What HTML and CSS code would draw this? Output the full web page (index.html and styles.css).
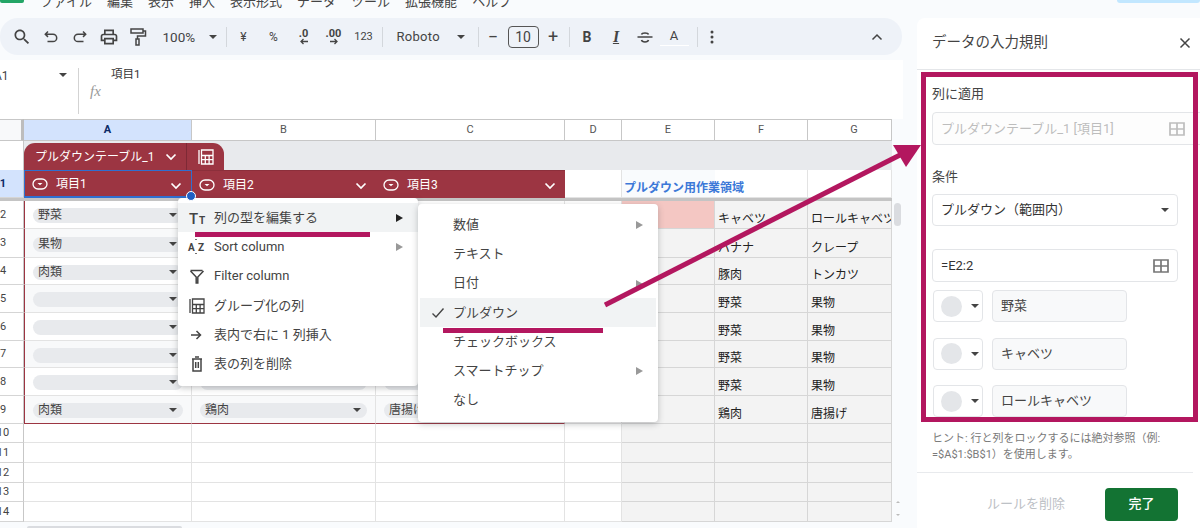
FILE: index.html
```html
<!DOCTYPE html>
<html lang="ja">
<head>
<meta charset="utf-8">
<title>データの入力規則</title>
<link rel="stylesheet" href="styles.css">
</head>
<body>
<svg class="defs" width="0" height="0">
  <symbol id="grid-ic" viewBox="0 0 16 14"><path d="M1 1h14v12H1zM8 1v12M1 7h14" fill="none" stroke="currentColor" stroke-width="1.7"/></symbol>
  <symbol id="chev" viewBox="0 0 12 8"><path d="M1.500 1.500 6 6l4.500-4.500" fill="none" stroke="currentColor" stroke-width="1.700"/></symbol>
  <symbol id="chip-ic" viewBox="0 0 16 12"><rect x="1" y="1" width="14" height="10" rx="5" fill="none" stroke="currentColor" stroke-width="1.300"/><path d="M5.500 5h5L8 7.200z" fill="currentColor"/></symbol>
  <symbol id="calc-ic" viewBox="0 0 16 16"><path d="M1 1v14M3.500 1h11.500v14H3.500z M3.500 6.500h11.500M7.300 6.500v8.500M11.100 6.500v8.500M3.500 10.700h11.500" fill="none" stroke="currentColor" stroke-width="1.300"/></symbol>
</svg>

<div class="app">
  <div class="left">
    <div class="menubar">
      <span class="logo"></span>
      <nav class="menus"><span>ファイル</span><span>編集</span><span>表示</span><span>挿入</span><span>表示形式</span><span>データ</span><span>ツール</span><span>拡張機能</span><span>ヘルプ</span></nav>
    </div>

    <div class="toolbar">
      <span class="tb"><svg width="20" height="20" viewBox="0 0 24 24"><path fill="#444" d="M15.500 14h-.79l-.28-.27C15.410 12.590 16 11.110 16 9.500 16 5.910 13.090 3 9.500 3S3 5.910 3 9.500 5.910 16 9.500 16c1.610 0 3.090-.59 4.230-1.570l.27.28v.79l5 4.990L20.490 19l-4.990-5zm-6 0C7.010 14 5 11.990 5 9.500S7.010 5 9.500 5 14 7.010 14 9.500 11.990 14 9.500 14z"/></svg></span>
      <span class="tb"><svg width="16" height="16" viewBox="0 0 16 16"><path d="M5 2.500 2.300 5.200 5 7.900M2.500 5.200H10a3.700 3.700 0 0 1 0 7.400H4.500" fill="none" stroke="#444" stroke-width="1.500"/></svg></span>
      <span class="tb"><svg width="16" height="16" viewBox="0 0 16 16"><path d="M11 2.500l2.700 2.700L11 7.900M13.500 5.200H6a3.700 3.700 0 0 0 0 7.400h5.500" fill="none" stroke="#444" stroke-width="1.500"/></svg></span>
      <span class="tb"><svg width="20" height="20" viewBox="0 0 24 24"><path fill="#444" d="M19 8h-1V3H6v5H5c-1.660 0-3 1.340-3 3v6h4v4h12v-4h4v-6c0-1.660-1.340-3-3-3zM8 5h8v3H8V5zm8 12v2H8v-4h8v2zm2-2v-2H6v2H4v-4c0-.55.45-1 1-1h14c.55 0 1 .45 1 1v4h-2z"/></svg></span>
      <span class="tb"><svg width="18" height="20" viewBox="0 0 18 20"><path d="M2 2h12v4H2zM14 4h2.500v5H8.500v3M7 12h3v6H7z" fill="none" stroke="#444" stroke-width="1.500"/></svg></span>
      <span class="tb-zoom">100%</span><span class="caret tb-caret"></span>
      <span class="sep sep-a"></span>
      <span class="tb2">¥</span><span class="tb2">%</span>
      <span class="tb2 dec"><b>.0</b><svg width="10" height="7" viewBox="0 0 10 7"><path d="M9 3.500H2M4.500 1 2 3.500 4.500 6" fill="none" stroke="#444" stroke-width="1.300"/></svg></span>
      <span class="tb2 dec"><b>.00</b><svg width="10" height="7" viewBox="0 0 10 7"><path d="M1 3.500h7M5.500 1 8 3.500 5.500 6" fill="none" stroke="#444" stroke-width="1.300"/></svg></span>
      <span class="tb2 num">123</span>
      <span class="sep sep-b"></span>
      <span class="tb-font">Roboto</span><span class="caret tb-caret2"></span>
      <span class="sep sep-c"></span>
      <span class="tb3 sz">−</span><span class="size-box">10</span><span class="tb3 sz">+</span>
      <span class="sep sep-d"></span>
      <span class="tb4 bold">B</span><span class="tb4 ital">I</span>
      <span class="tb4"><svg width="18" height="18" viewBox="0 0 18 18"><path d="M1.500 9h15M5.500 6.500C6 4.500 12 4.500 12.500 6.500M5.500 12c.5 2.500 6.500 2.500 7 0" fill="none" stroke="#444" stroke-width="1.500"/></svg></span>
      <span class="tb4 acolor">A</span>
      <span class="sep sep-e"></span>
      <span class="tb4"><svg width="4" height="14" viewBox="0 0 4 14"><circle cx="2" cy="2" r="1.500" fill="#444"/><circle cx="2" cy="7" r="1.500" fill="#444"/><circle cx="2" cy="12" r="1.500" fill="#444"/></svg></span>
      <span class="tb-end"><svg width="12" height="8" viewBox="0 0 12 8"><path d="M1.500 6.500 6 2l4.500 4.500" fill="none" stroke="#444" stroke-width="1.500"/></svg></span>
    </div>

    <div class="formula">
      <div class="namebox"><span>A1</span><span class="caret"></span></div>
      <div class="fx-wrap"><span class="fx">fx</span></div>
      <div class="fx-val">項目1</div>
    </div>

    <div class="sheet">
      <div class="corner"></div>
      <div class="ch ch-on">A</div><div class="ch">B</div><div class="ch">C</div><div class="ch">D</div><div class="ch">E</div><div class="ch">F</div><div class="ch ch-g">G</div>

      <div class="rh rh-blank"></div>
      <div class="tabrow">
        <div class="tab"><span class="tab-name">プルダウンテーブル_1</span><svg class="tab-chev" width="12" height="8"><use href="#chev"/></svg><span class="tab-calc"><svg width="16" height="16"><use href="#calc-ic"/></svg></span></div>
      </div>

      <div class="rh rh-on">1</div>
      <div class="th th-a"><svg class="th-ic" width="16" height="12"><use href="#chip-ic"/></svg><span>項目1</span><svg class="th-chev" width="12" height="8"><use href="#chev"/></svg><i class="handle"></i></div>
      <div class="th"><svg class="th-ic" width="16" height="12"><use href="#chip-ic"/></svg><span>項目2</span><svg class="th-chev" width="12" height="8"><use href="#chev"/></svg></div>
      <div class="th"><svg class="th-ic" width="16" height="12"><use href="#chip-ic"/></svg><span>項目3</span><svg class="th-chev" width="12" height="8"><use href="#chev"/></svg></div>
      <div class="c"></div>
      <div class="c c-title">プルダウン用作業領域</div><div class="c"></div><div class="c"></div>

      <div class="freeze"></div>

      <div class="rh">2</div>
      <div class="c t-a"><span class="chip">野菜<i class="caret"></i></span></div><div class="c"><span class="chip"><i class="caret"></i></span></div><div class="c"></div><div class="c"></div>
      <div class="c w c-pink"></div><div class="c w">キャベツ</div><div class="c w clip">ロールキャベツ</div>

      <div class="rh">3</div>
      <div class="c t-a alt"><span class="chip">果物<i class="caret"></i></span></div><div class="c alt"></div><div class="c alt"></div><div class="c"></div>
      <div class="c w"></div><div class="c w">バナナ</div><div class="c w">クレープ</div>

      <div class="rh">4</div>
      <div class="c t-a"><span class="chip">肉類<i class="caret"></i></span></div><div class="c"></div><div class="c"></div><div class="c"></div>
      <div class="c w"></div><div class="c w">豚肉</div><div class="c w">トンカツ</div>

      <div class="rh">5</div>
      <div class="c t-a alt"><span class="chip"><i class="caret"></i></span></div><div class="c alt"></div><div class="c alt"></div><div class="c"></div>
      <div class="c w"></div><div class="c w">野菜</div><div class="c w">果物</div>

      <div class="rh">6</div>
      <div class="c t-a"><span class="chip"><i class="caret"></i></span></div><div class="c"></div><div class="c"></div><div class="c"></div>
      <div class="c w"></div><div class="c w">野菜</div><div class="c w">果物</div>

      <div class="rh">7</div>
      <div class="c t-a alt"><span class="chip"><i class="caret"></i></span></div><div class="c alt"></div><div class="c alt"></div><div class="c"></div>
      <div class="c w"></div><div class="c w">野菜</div><div class="c w">果物</div>

      <div class="rh">8</div>
      <div class="c t-a"><span class="chip"><i class="caret"></i></span></div><div class="c"><span class="chip"><i class="caret"></i></span></div><div class="c"><span class="chip"></span></div><div class="c"></div>
      <div class="c w"></div><div class="c w">野菜</div><div class="c w">果物</div>

      <div class="rh">9</div>
      <div class="c t-a t-b alt"><span class="chip">肉類<i class="caret"></i></span></div><div class="c t-b alt"><span class="chip">鶏肉<i class="caret"></i></span></div><div class="c t-b alt"><span class="chip">唐揚げ<i class="caret"></i></span></div><div class="c"></div>
      <div class="c w"></div><div class="c w">鶏肉</div><div class="c w">唐揚げ</div>

      <div class="rh">10</div><div class="c"></div><div class="c"></div><div class="c"></div><div class="c"></div><div class="c w"></div><div class="c w"></div><div class="c w"></div>
      <div class="rh">11</div><div class="c"></div><div class="c"></div><div class="c"></div><div class="c"></div><div class="c w"></div><div class="c w"></div><div class="c w"></div>
      <div class="rh">12</div><div class="c"></div><div class="c"></div><div class="c"></div><div class="c"></div><div class="c w"></div><div class="c w"></div><div class="c w"></div>
      <div class="rh">13</div><div class="c"></div><div class="c"></div><div class="c"></div><div class="c"></div><div class="c w"></div><div class="c w"></div><div class="c w"></div>
      <div class="rh">14</div><div class="c"></div><div class="c"></div><div class="c"></div><div class="c"></div><div class="c w"></div><div class="c w"></div><div class="c w"></div>
    </div>
  </div>

  <aside class="panel">
    <header class="panel-head"><h1>データの入力規則</h1><svg width="12" height="12" viewBox="0 0 12 12"><path d="M1.500 1.500l9 9M10.500 1.500l-9 9" stroke="#444" stroke-width="1.500"/></svg></header>
    <div class="panel-scroll">
      <div class="lbl lbl-1">列に適用</div>
      <div class="field field-wide"><span class="ph">プルダウンテーブル_1 [項目1]</span><svg class="gi-light" width="16" height="14"><use href="#grid-ic"/></svg></div>
      <div class="lbl lbl-2">条件</div>
      <div class="field field-sel"><span>プルダウン（範囲内）</span><span class="caret"></span></div>
      <div class="field field-range"><span>=E2:2</span><svg class="gi" width="16" height="14"><use href="#grid-ic"/></svg></div>
      <div class="opt"><span class="swatch"><i></i><span class="caret"></span></span><span class="opt-text">野菜</span></div>
      <div class="opt"><span class="swatch"><i></i><span class="caret"></span></span><span class="opt-text">キャベツ</span></div>
      <div class="opt"><span class="swatch"><i></i><span class="caret"></span></span><span class="opt-text">ロールキャベツ</span></div>
    </div>
    <p class="hint">ヒント: 行と列をロックするには絶対参照（例: =$A$1:$B$1）を使用します。</p>
    <footer class="panel-foot"><span class="del">ルールを削除</span><span class="done">完了</span></footer>
  </aside>
</div>

<span class="share"></span>

<div class="sb-thumb"></div>
<div class="sb-btns"><i class="up"></i><i class="down"></i></div>
<div class="hs-thumb"></div>

<div class="ctx ctx-1">
  <div class="mi on"><svg class="mi-ic" width="20" height="16" viewBox="0 0 20 16"><text x="2" y="14" class="ict">T</text><text x="12" y="14" class="ics">T</text></svg><span>列の型を編集する</span><i class="arr dark"></i></div>
  <div class="mi"><svg class="mi-ic" width="20" height="18" viewBox="0 0 20 18"><text x="1" y="13" class="ics">A</text><text x="11" y="13" class="ics">Z</text><path d="M9 1v1M9 15v1" stroke="#444" stroke-width="1.500"/></svg><span>Sort column</span><i class="arr"></i></div>
  <div class="mi"><svg class="mi-ic" width="20" height="16" viewBox="0 0 20 16"><path d="M3.500 2.500h12M3.500 3l5.700 6v6h1.600V9l5.700-6" fill="none" stroke="#444" stroke-width="1.500"/></svg><span>Filter column</span></div>
  <div class="mi"><svg class="mi-ic" width="20" height="16"><use href="#calc-ic"/></svg><span>グループ化の列</span></div>
  <div class="mi"><svg class="mi-ic" width="20" height="14" viewBox="0 0 20 14"><path d="M4 7h10M9.500 3l4 4-4 4" fill="none" stroke="#444" stroke-width="1.500"/></svg><span>表内で右に 1 列挿入</span></div>
  <div class="mi"><svg class="mi-ic" width="20" height="16" viewBox="0 0 20 16"><path d="M5 3h10M8 1h4M6 3v12h8V3M8.700 6v6M11.300 6v6" fill="none" stroke="#444" stroke-width="1.500"/></svg><span>表の列を削除</span></div>
</div>

<div class="ctx ctx-2">
  <div class="mi"><span class="sub">数値</span><i class="arr"></i></div>
  <div class="mi"><span class="sub">テキスト</span></div>
  <div class="mi"><span class="sub">日付</span><i class="arr"></i></div>
  <div class="mi on"><svg class="chk" width="14" height="12" viewBox="0 0 14 12"><path d="M1.500 6.500 5 10l7.500-8.500" fill="none" stroke="#444" stroke-width="1.400"/></svg><span class="sub">プルダウン</span></div>
  <div class="mi"><span class="sub">チェックボックス</span></div>
  <div class="mi"><span class="sub">スマートチップ</span><i class="arr"></i></div>
  <div class="mi"><span class="sub">なし</span></div>
</div>

<svg class="annot" width="1200" height="528" viewBox="0 0 1200 528">
  <rect x="923.500" y="74.500" width="272" height="345" fill="none" stroke="#b3175f" stroke-width="5"/>
  <path d="M195 234.500H370M443 330.500H603" stroke="#b3175f" stroke-width="5"/>
  <path d="M605 305 902 154" stroke="#b3175f" stroke-width="5"/>
  <path d="M921 145 893 145 906 167z" fill="#b3175f"/>
</svg>
</body>
</html>
```

FILE: styles.css
```css
* { box-sizing: border-box; }
html, body { margin: 0; padding: 0; }
body {
  position: relative;
  width: 1200px;
  height: 528px;
  overflow: hidden;
  background: #f9fbfd;
  color: #444;
  font: 13px/16px Roboto, "Noto Sans CJK JP", sans-serif;
}
i { font-style: normal; display: block; }
.defs { position: absolute; }
.app { display: flex; height: 528px; }
.left { width: 917px; flex: none; }

.caret { display: inline-block; width: 0; height: 0; border: 4px solid transparent; border-top: 4.500px solid #444; border-bottom: 0; }

/* menu bar */
.menubar { height: 18px; overflow: hidden; position: relative; }
.logo { position: absolute; left: 0; top: 0; width: 24px; height: 3px; background: #23a566; border-radius: 0 0 2px 2px; }
.menus { display: flex; gap: 15px; margin: -6px 0 0 40px; color: #444; }
.share { position: absolute; left: 1117px; top: 0; width: 83px; height: 3px; background: #c2e7ff; border-radius: 0 0 8px 8px; }

/* toolbar */
.toolbar {
  display: flex; align-items: center; width: 902px; height: 37px; padding-left: 7px;
  background: #eef2f8; border-radius: 18px;
}
.tb { width: 29px; display: flex; justify-content: center; align-items: center; flex: none; }
.tb-zoom { margin-left: 10.500px; width: 44px; font-size: 13.500px; flex: none; }
.tb-caret { margin-left: 2px; }
.sep { width: 1px; height: 20px; background: #d3d7dc; flex: none; }
.sep-a { margin-left: 9px; margin-right: 2px; }
.tb2 { width: 30px; display: flex; flex-direction: column; align-items: center; justify-content: center; font-size: 12px; flex: none; }
.dec { line-height: 9px; }
.dec b { font-size: 11px; font-weight: 700; }
.num { font-size: 11px; }
.sep-b { margin-left: 3px; }
.tb-font { margin-left: 14px; width: 57px; font-size: 13px; letter-spacing: .3px; flex: none; }
.tb-caret2 { margin-left: 3px; }
.sep-c { margin-left: 13px; }
.tb3 { width: 29px; display: flex; justify-content: center; font-size: 18px; flex: none; }
.size-box { width: 31px; height: 22px; border: 1px solid #555; border-radius: 4px; display: flex; align-items: center; justify-content: center; font-size: 14px; flex: none; }
.sep-d { margin-left: 1px; }
.tb4 { width: 29px; display: flex; justify-content: center; align-items: center; flex: none; font-size: 14px; }
.bold { font-weight: 700; margin-left: 3px; }
.ital { font-family: "Liberation Serif", serif; font-style: italic; font-weight: 700; font-size: 16px; text-decoration: underline; }
.acolor { font-size: 13px; border-bottom: 1px solid #fff; height: 18px; }
.sep-e { margin-left: 8px; }
.tb-end { margin-left: 144px; display: flex; }

/* formula bar */
.formula { position: relative; height: 59px; margin-top: 5px; width: 903px; background: #fff; display: flex; }
.namebox { width: 85px; height: 46px; margin: 8px 0 0 -6px; border-right: 1px solid #d3d3d3; display: flex; justify-content: space-between; padding: 0 11px 0 0; font-size: 12px; }
.namebox .caret { margin-top: 5px; }
.fx-wrap { position: absolute; left: 90px; top: 23px; }
.fx { font: italic 15px/16px "Liberation Serif", serif; color: #999; }
.fx-val { margin: 6px 0 0 32px; font-size: 11.500px; color: #333; }

/* sheet */
.sheet {
  width: 929px; margin-left: -14px;
  display: grid;
  grid-template-columns: 38px 168px 184px 189px 57px 93px 93px 84px;
  grid-template-rows: 22px 29px 28px 3px 28px 29px 27px 28px 28px 27px 28px 28px 19px 20px 20px 19px 20px;
}
.corner { background: #f8f9fa; border-top: 1px solid #c7c7c7; border-right: 3px solid #bdbdbd; border-bottom: 1px solid #c7c7c7; }
.ch { background: #fff; border-top: 1px solid #c7c7c7; border-right: 1px solid #c7c7c7; border-bottom: 1px solid #c7c7c7; display: flex; justify-content: center; align-items: center; font-size: 11px; color: #555; }
.ch-on { background: #d3e3fd; color: #0b2a66; font-weight: 700; }
.ch-g { padding-left: 9px; }
.rh { background: #fff; border-right: 1px solid #c7c7c7; border-bottom: 1px solid #d5d5d5; display: flex; justify-content: center; align-items: center; padding-right: 3px; font-size: 11px; }
.rh-blank { border-bottom: 0; background: #fff; }
.rh-on { background: #d3e3fd; color: #0b2a66; font-weight: 700; }
.tabrow { grid-column: 2 / -1; background: #e8eaed; display: flex; }
.tab { width: 200px; margin-top: 2px; background: #9c3542; color: #fff; border-radius: 11px 11px 0 0; display: flex; align-items: center; padding-left: 11px; position: relative; }
.tab-name { width: 118px; white-space: nowrap; font-size: 12px; }
.tab-chev { margin-left: 12px; }
.tab-calc { position: absolute; left: 162px; top: 0; height: 27px; width: 38px; border-left: 1px solid #7e2935; display: flex; align-items: center; justify-content: center; }

.th { background: #9c3542; color: #fff; display: flex; align-items: center; padding-left: 7px; position: relative; font-size: 12px; font-weight: 400; border-top: 1px solid #8c2f3b; }
.th-ic { flex: none; width: 16px; }
.th span { margin-left: 8px; }
.th-chev { position: absolute; right: 9px; top: 11px; }
.th-a { border: 1px solid #2f6fd0; border-bottom-width: 2px; padding-left: 7px; }
.handle { position: absolute; right: -5px; bottom: -5px; width: 8px; height: 8px; border-radius: 50%; background: #1f5fc4; border: 1px solid #fff; z-index: 1; box-sizing: content-box; }

.freeze { grid-column: 1 / -1; background: #c4c4c4; }

.c { background: #fff; border-right: 1px solid #e3e3e3; border-bottom: 1px solid #e3e3e3; display: flex; align-items: center; min-width: 0; overflow: hidden; font-size: 12px; }
.alt { background: #f8f9fa; }
.w { background: #f3f3f3; border-color: #d6d6d6; color: #222; align-items: flex-end; padding: 0 0 1px 3px; white-space: nowrap; }
.c-pink { background: #f4c7c3; }
.clip { overflow: hidden; }
.c-title { position: relative; z-index: 1; background: transparent; color: #3c78d8; font-weight: 700; align-items: flex-end; padding: 0 0 1px 2px; white-space: nowrap; overflow: visible; font-size: 12px; border-right: 0; }
.t-a { border-left: 1px solid #9c3542; }
.t-b { border-bottom: 1px solid #9c3542; }

.chip { position: relative; flex: 1; height: 15px; margin: 2px 8px 0 8px; padding-left: 5px; background: #e8eaed; border-radius: 8px; font-size: 12px; line-height: 15px; white-space: nowrap; color: #444; }
.chip .caret { position: absolute; right: 6px; top: 5px; }

/* panel */
.panel { width: 283px; margin-top: 18px; height: 510px; background: #fff; border-radius: 8px 0 0 0; flex: none; }
.panel-head { height: 52px; border-bottom: 1px solid #e4e6e9; display: flex; justify-content: space-between; align-items: center; padding: 0 9px 2px 15px; }
.panel-head h1 { margin: 0; font-size: 14.500px; font-weight: 400; color: #444; }
.panel-scroll { height: 350px; overflow: hidden; padding-left: 15px; }
.lbl { line-height: 16px; }
.lbl-1 { margin-top: 16px; }
.lbl-2 { margin-top: 24px; }
.field { display: flex; align-items: center; justify-content: space-between; border: 1px solid #e3e5e8; border-radius: 4px; width: 246px; height: 33px; padding: 0 8px; color: #333; }
.field-wide { width: 280px; margin-top: 10px; padding-right: 26px; background: #fdfdfd; }
.ph { color: #bdbdbd; }
.gi-light { color: #bdbdbd; }
.gi { color: #777; }
.field-sel { margin-top: 9px; height: 32px; }
.field-range { margin-top: 23px; }
.opt { display: flex; margin-top: 15.500px; height: 32px; }
.field-range + .opt { margin-top: 8px; }
.swatch { width: 50px; margin-left: 1px; border: 1px solid #e3e5e8; border-radius: 4px; display: flex; align-items: center; padding-left: 7px; gap: 9px; }
.swatch i { width: 21px; height: 21px; border-radius: 50%; background: #e4e6e9; }
.opt-text { width: 135px; margin-left: 9px; border: 1px solid #e3e5e8; border-radius: 4px; background: #f8f9fa; display: flex; align-items: center; padding-left: 8px; color: #444; }
.hint { margin: 11px 27px 0 15px; font-size: 11px; line-height: 16px; color: #7a7a7a; }
.panel-foot { margin: 9px 7px 0 0; border-top: 1px solid #e8eaed; height: 56px; display: flex; align-items: center; justify-content: flex-end; padding: 7px 15px 0 0; position: relative; }
.del { color: #bdc1c6; margin-right: 40px; }
.done { width: 73px; height: 33px; border-radius: 4px; background: #137333; color: #fff; font-weight: 500; display: flex; align-items: center; justify-content: center; }

/* scrollbars */
.sb-thumb { position: absolute; left: 894px; top: 203px; width: 7px; height: 23px; border-radius: 4px; background: #dadce0; }
.sb-btns { position: absolute; left: 893px; top: 495px; width: 9px; height: 26px; display: flex; flex-direction: column; justify-content: space-around; align-items: center; }
.sb-btns i { width: 0; height: 0; border: 2.500px solid transparent; }
.sb-btns .up { border-bottom-color: #bbb; border-top: 0; }
.sb-btns .down { border-top-color: #bbb; border-bottom: 0; }
.hs-thumb { position: absolute; left: 27px; top: 526px; width: 155px; height: 4px; border-radius: 3px; background: #dadce0; }

/* context menus */
.ctx { position: absolute; width: 240px; background: #fff; border-radius: 4px; box-shadow: 0 2px 6px rgba(60,64,67,.3); }
.ctx-1 { left: 178px; top: 198px; height: 188px; padding: 5px 0; }
.ctx-2 { left: 418px; top: 204px; height: 218px; padding: 6px 0; }
.mi { height: 29.300px; display: flex; align-items: center; position: relative; color: #444; white-space: nowrap; }
.mi.on { background: #f1f3f4; }
.ctx-2 .mi.on { margin: 0 2px; }
.mi-ic { position: absolute; left: 9px; color: #444; }
.mi > span { margin-left: 36px; }
.ctx-2 .mi > span.sub { margin-left: 35px; }
.ctx-2 .mi.on > span.sub { margin-left: 33px; }
.chk { position: absolute; left: 11px; }
.arr { position: absolute; right: 15px; top: 11px; width: 0; height: 0; border: 4px solid transparent; border-left: 7px solid #999; border-right: 0; }
.arr.dark { border-left-color: #222; }
.ict { font: 500 15px Roboto, sans-serif; fill: #444; }
.ics { font: 700 10px Roboto, sans-serif; fill: #444; }

/* annotations drawn over the screen */
.annot { position: absolute; left: 0; top: 0; pointer-events: none; }
```
